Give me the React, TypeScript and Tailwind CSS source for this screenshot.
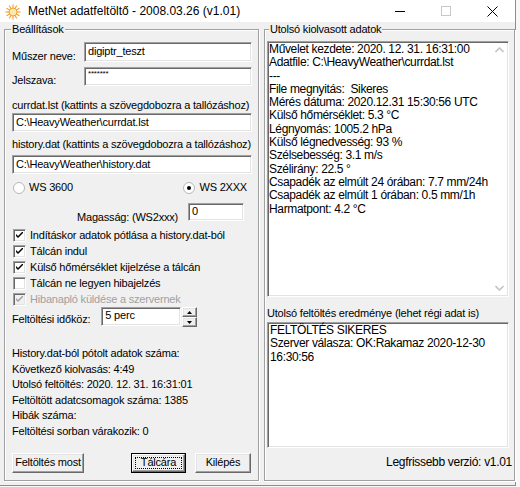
import React from "react";

const sunken =
  "bg-white border border-t-[#a0a0a0] border-l-[#a0a0a0] border-b-white border-r-white shadow-[inset_1px_1px_0_#696969,inset_-1px_-1px_0_#e3e3e3]";
const raised =
  "bg-[#f0f0f0] border border-t-white border-l-white border-b-[#696969] border-r-[#696969] shadow-[inset_-1px_-1px_0_#a0a0a0,inset_1px_1px_0_#e3e3e3]";
const etched =
  "border border-[#a0a0a0] shadow-[inset_1px_1px_0_#ffffff,1px_1px_0_#ffffff]";

function SunIcon() {
  return (
    <svg width="16" height="16" viewBox="0 0 16 16">
      {[0, 30, 60, 90, 120, 150, 180, 210, 240, 270, 300, 330].map((a) => (
        <line
          key={a}
          x1="8"
          y1="8"
          x2={8 + 7.5 * Math.cos((a * Math.PI) / 180)}
          y2={8 + 7.5 * Math.sin((a * Math.PI) / 180)}
          stroke="#f2a23a"
          strokeWidth="1.2"
        />
      ))}
      <circle cx="8" cy="8" r="4" fill="#fde9b0" stroke="#f0a030" strokeWidth="1" />
    </svg>
  );
}

function TitleBar() {
  return (
    <div className="h-[22px] bg-white flex items-center shrink-0">
      <div className="ml-[5px] mt-[1px] flex items-center">
        <SunIcon />
      </div>
      <span className="ml-[7px] text-[12px] text-black">MetNet adatfeltöltő - 2008.03.26 (v1.01)</span>
      <div className="ml-auto flex items-center h-full">
        <div className="w-[46px] h-full flex items-center justify-center">
          <div className="w-[10px] h-px bg-black" />
        </div>
        <div className="w-[46px] h-full flex items-center justify-center">
          <div className="w-[10px] h-[10px] border border-[#c8c8c8]" />
        </div>
        <div className="w-[46px] h-full flex items-center justify-center">
          <svg width="11" height="11" viewBox="0 0 11 11">
            <path d="M0.5 0.5 L10.5 10.5 M10.5 0.5 L0.5 10.5" stroke="#000" strokeWidth="1" />
          </svg>
        </div>
      </div>
    </div>
  );
}

function GroupLabel({ children, className = "" }: { children: React.ReactNode; className?: string }) {
  return (
    <span className={`absolute -top-[8px] bg-[#f0f0f0] px-[1px] leading-[14px] ${className}`}>
      {children}
    </span>
  );
}

function Check({ checked, disabled, label }: { checked?: boolean; disabled?: boolean; label: string }) {
  return (
    <div className="h-[16px] flex items-center">
      <div
        className={`w-[13px] h-[13px] ml-[1px] flex items-center justify-center ${
          disabled ? "bg-[#f0f0f0]" : "bg-white"
        } border border-t-[#a0a0a0] border-l-[#a0a0a0] border-b-white border-r-white shadow-[inset_1px_1px_0_#696969,inset_-1px_-1px_0_#e3e3e3]`}
      >
        {checked && (
          <svg width="7" height="7" viewBox="0 0 7 7">
            <path d="M0 2 L0 4 L2 6 L7 1 L7 -1 L2 4 Z" fill={disabled ? "#a0a0a0" : "#000"} />
          </svg>
        )}
      </div>
      <span className={`ml-[4px] leading-[13px] ${disabled ? "text-[#a0a0a0]" : ""}`}>{label}</span>
    </div>
  );
}

function Radio({ checked, label }: { checked?: boolean; label: string }) {
  return (
    <div className="flex items-center h-[13px]">
      <div className="w-[12px] h-[12px] rounded-full bg-white border border-[#b8b8b8] flex items-center justify-center">
        {checked && <div className="w-[4px] h-[4px] rounded-full bg-black" />}
      </div>
      <span className="ml-[4px] leading-[13px]">{label}</span>
    </div>
  );
}

function Field({ children, className = "" }: { children?: React.ReactNode; className?: string }) {
  return <div className={`${sunken} px-[3px] flex items-start pt-[2px] leading-[13px] ${className}`}>{children}</div>;
}

function Btn({ children, className = "", focused }: { children: React.ReactNode; className?: string; focused?: boolean }) {
  if (focused) {
    return (
      <div className={`border border-black h-[20px] ${className}`}>
        <div className={`${raised} h-full flex items-center justify-center p-[2px]`}>
          <div className="border border-dotted border-black w-full h-full flex items-center justify-center">
            {children}
          </div>
        </div>
      </div>
    );
  }
  return <div className={`${raised} h-[20px] flex items-center justify-center ${className}`}>{children}</div>;
}

function Spinner() {
  const arrowBtn = `${raised} h-[10px] w-[15px] flex items-center justify-center`;
  return (
    <div className="flex flex-col ml-[1px]">
      <div className={arrowBtn}>
        <svg width="5" height="3" viewBox="0 0 5 3">
          <path d="M2.5 0 L5 3 L0 3 Z" fill="#000" />
        </svg>
      </div>
      <div className={arrowBtn}>
        <svg width="5" height="3" viewBox="0 0 5 3">
          <path d="M0 0 L5 0 L2.5 3 Z" fill="#000" />
        </svg>
      </div>
    </div>
  );
}

function LeftPanel() {
  const stats = [
    "History.dat-ból pótolt adatok száma:",
    "Következő kiolvasás: 4:49",
    "Utolsó feltöltés: 2020. 12. 31. 16:31:01",
    "Feltöltött adatcsomagok száma: 1385",
    "Hibák száma:",
    "Feltöltési sorban várakozik: 0",
  ];
  return (
    <div className={`relative ${etched} w-[255px] h-[452px] pl-[7px] pr-[6px] flex flex-col`}>
      <GroupLabel className="left-[6px]">Beállítások</GroupLabel>

      <div className="mt-[12px] h-[20px] flex items-start">
        <span className="mt-[8px] leading-[13px]">Műszer neve:</span>
        <Field className="ml-auto w-[168px] h-[20px]">digiptr_teszt</Field>
      </div>
      <div className="mt-[5px] h-[19px] flex items-start">
        <span className="mt-[7px] leading-[13px]">Jelszava:</span>
        <Field className="ml-auto w-[168px] h-[19px] !pt-[1px]">
          <span className="text-[8px] leading-[10px]">*******</span>
        </Field>
      </div>

      <div className="mt-[13px] leading-[13px]">currdat.lst (kattints a szövegdobozra a tallózáshoz)</div>
      <Field className="mt-[1px] h-[19px] w-full">C:\HeavyWeather\currdat.lst</Field>

      <div className="mt-[6px] leading-[13px]">history.dat (kattints a szövegdobozra a tallózáshoz)</div>
      <Field className="mt-[4px] h-[19px] w-full">C:\HeavyWeather\history.dat</Field>

      <div className="mt-[7px] flex items-center">
        <div className="ml-[1px]">
          <Radio label="WS 3600" />
        </div>
        <div className="ml-auto mr-[5px]">
          <Radio checked label="WS 2XXX" />
        </div>
      </div>

      <div className="mt-[9px] h-[18px] flex items-start">
        <span className="ml-auto mt-[8px] leading-[13px]">Magasság: (WS2xxx)</span>
        <Field className="ml-[10px] mr-[8px] w-[56px] h-[18px] !pt-[1px]">0</Field>
      </div>

      <div className="mt-[6px] flex flex-col">
        <Check checked label="Indításkor adatok pótlása a history.dat-ból" />
        <Check checked label="Tálcán indul" />
        <Check checked label="Külső hőmérséklet kijelzése a tálcán" />
        <Check label="Tálcán ne legyen hibajelzés" />
        <Check checked disabled label="Hibanapló küldése a szervernek" />
      </div>

      <div className="h-[20px] flex items-start">
        <span className="mt-[6px] leading-[13px]">Feltöltési időköz:</span>
        <Field className="ml-[11px] w-[80px] h-[19px] !pt-[1px]">5 perc</Field>
        <Spinner />
      </div>

      <div className="mt-[19px] flex flex-col">
        {stats.map((s) => (
          <div key={s} className="h-[15.6px] leading-[15.6px]">
            {s}
          </div>
        ))}
      </div>

      <div className="mt-[13px] flex items-center">
        <Btn className="w-[72px]">Feltöltés most</Btn>
        <Btn focused className="ml-[47px] w-[55px]">
          Tálcára
        </Btn>
        <Btn className="ml-[9px] w-[56px]">Kilépés</Btn>
      </div>
    </div>
  );
}

function ScrollTrack() {
  return (
    <div className="w-[17px] h-full flex flex-col justify-between items-center py-[5px] shrink-0">
      <svg width="9" height="6" viewBox="0 0 9 6">
        <path d="M0.5 5 L4.5 1 L8.5 5" stroke="#c4c4c4" strokeWidth="1.6" fill="none" />
      </svg>
      <svg width="9" height="6" viewBox="0 0 9 6">
        <path d="M0.5 1 L4.5 5 L8.5 1" stroke="#c4c4c4" strokeWidth="1.6" fill="none" />
      </svg>
    </div>
  );
}

function RightPanel() {
  const lines = [
    "Művelet kezdete: 2020. 12. 31. 16:31:00",
    "Adatfile: C:\\HeavyWeather\\currdat.lst",
    "---",
    "File megnyitás:  Sikeres",
    "Mérés dátuma: 2020.12.31 15:30:56 UTC",
    "Külső hőmérséklet: 5.3 °C",
    "Légnyomás: 1005.2 hPa",
    "Külső légnedvesség: 93 %",
    "Szélsebesség: 3.1 m/s",
    "Szélirány: 22.5 °",
    "Csapadék az elmúlt 24 órában: 7.7 mm/24h",
    "Csapadék az elmúlt 1 órában: 0.5 mm/1h",
    "Harmatpont: 4.2 °C",
  ];
  return (
    <div className={`relative ${etched} w-[251px] h-[452px] pl-[2px] pr-[5px] flex flex-col`}>
      <GroupLabel className="left-[4px]">Utolsó kiolvasott adatok</GroupLabel>

      <div className={`${sunken} mt-[11px] h-[256px] flex`}>
        <div className="flex-1 pl-[1px] pt-[1px] text-[12px] tracking-[-0.35px] leading-[13.3px] whitespace-pre">
          {lines.map((l) => (
            <div key={l}>{l}</div>
          ))}
        </div>
        <ScrollTrack />
      </div>

      <div className="mt-[10px] leading-[13px]">Utolsó feltöltés eredménye (lehet régi adat is)</div>
      <div className={`${sunken} mt-[2px] h-[126px] pl-[2px] pt-[1px] text-[12px] tracking-[-0.35px] leading-[13.4px]`}>
        <div>FELTÖLTÉS SIKERES</div>
        <div>Szerver válasza: OK:Rakamaz 2020-12-30</div>
        <div>16:30:56</div>
      </div>

      <div className="mt-[8px] leading-[13px] text-right text-[12px] tracking-[-0.3px] -mr-[3px]">
        Legfrissebb verzió: v1.01
      </div>
    </div>
  );
}

export default function App() {
  return (
    <div className="w-[520px] h-[487px] bg-[#f7f7f7] overflow-hidden whitespace-nowrap font-['Liberation_Sans',Arial,sans-serif] text-[11px] tracking-[-0.2px] text-black">
      <div className="w-[516px] h-[486px] bg-[#f0f0f0] border-r border-b border-[#8c8c8c] flex flex-col">
        <div className="tracking-normal">
          <TitleBar />
        </div>
        <div className="flex pl-[4px] mt-[7px]">
          <LeftPanel />
          <div className="ml-[5px]">
            <RightPanel />
          </div>
        </div>
      </div>
    </div>
  );
}
